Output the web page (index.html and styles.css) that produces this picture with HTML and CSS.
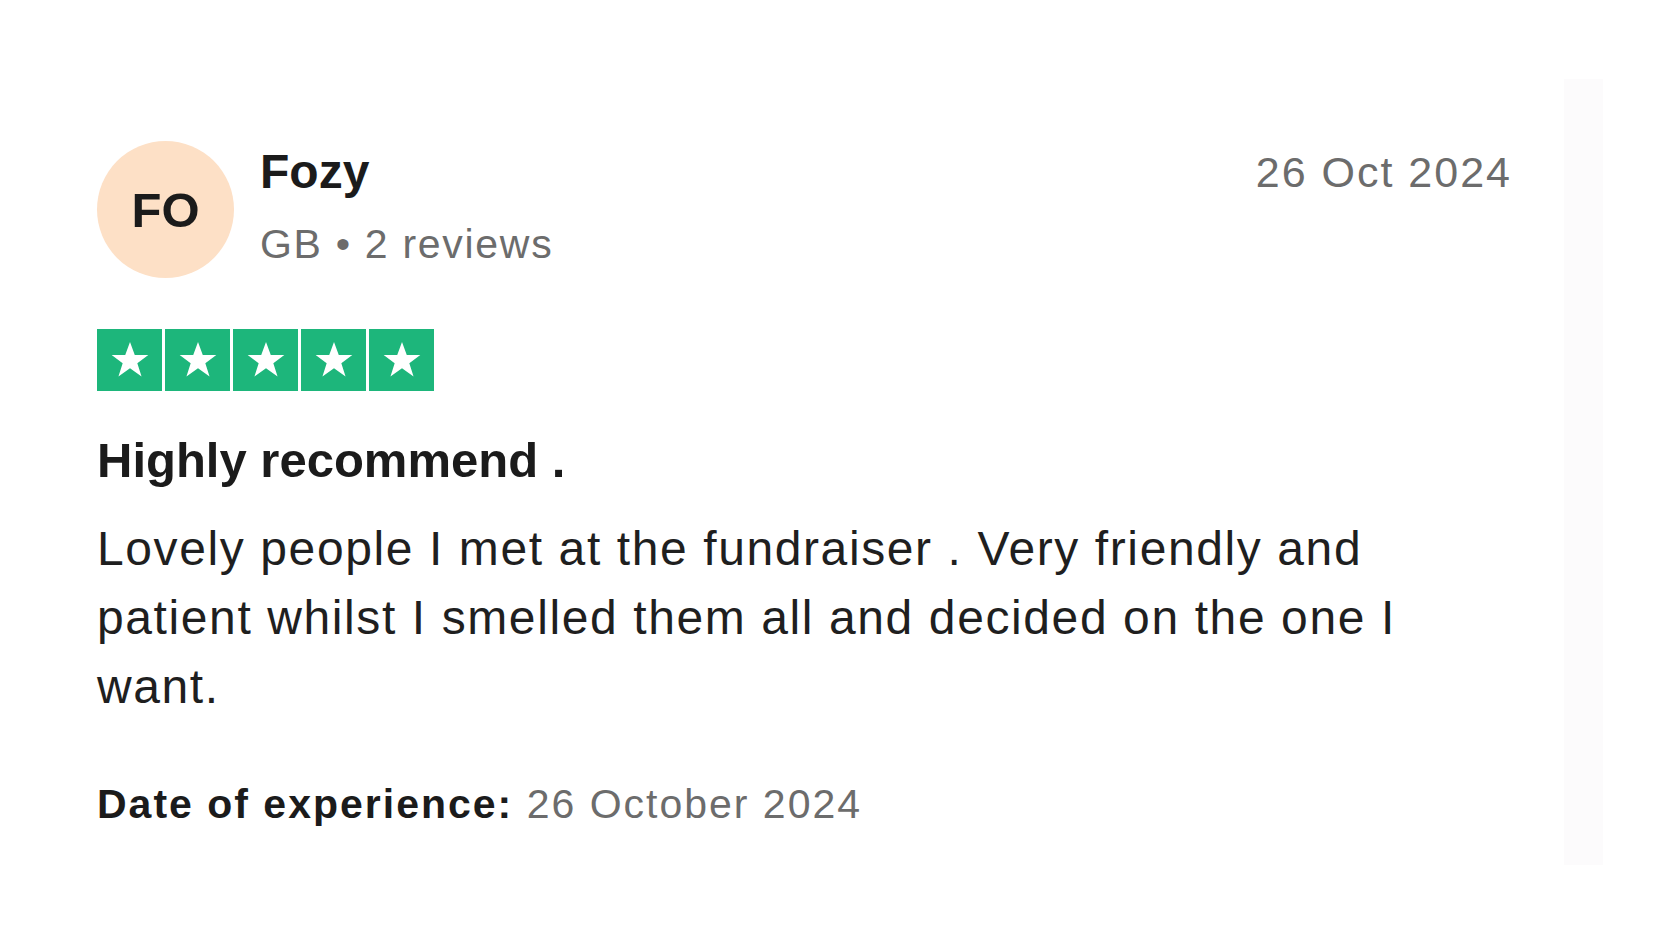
FILE: index.html
```html
<!DOCTYPE html>
<html lang="en">
<head>
<meta charset="utf-8">
<title>Review</title>
<link rel="stylesheet" href="styles.css">
</head>
<body>
<div class="page">
  <article class="review">
    <header class="review-header">
      <div class="avatar">FO</div>
      <div class="consumer">
        <div class="consumer-name">Fozy</div>
        <div class="consumer-meta">GB • 2 reviews</div>
      </div>
      <time class="review-date">26 Oct 2024</time>
    </header>
    <div class="stars">
      <span class="star"><svg viewBox="0 0 24 24"><polygon points="12,2.2 14.6,9.3 22,9.3 16,13.8 18.3,21 12,16.5 5.7,21 8,13.8 2,9.3 9.4,9.3"/></svg></span>
      <span class="star"><svg viewBox="0 0 24 24"><polygon points="12,2.2 14.6,9.3 22,9.3 16,13.8 18.3,21 12,16.5 5.7,21 8,13.8 2,9.3 9.4,9.3"/></svg></span>
      <span class="star"><svg viewBox="0 0 24 24"><polygon points="12,2.2 14.6,9.3 22,9.3 16,13.8 18.3,21 12,16.5 5.7,21 8,13.8 2,9.3 9.4,9.3"/></svg></span>
      <span class="star"><svg viewBox="0 0 24 24"><polygon points="12,2.2 14.6,9.3 22,9.3 16,13.8 18.3,21 12,16.5 5.7,21 8,13.8 2,9.3 9.4,9.3"/></svg></span>
      <span class="star"><svg viewBox="0 0 24 24"><polygon points="12,2.2 14.6,9.3 22,9.3 16,13.8 18.3,21 12,16.5 5.7,21 8,13.8 2,9.3 9.4,9.3"/></svg></span>
    </div>
    <h2 class="review-title">Highly recommend .</h2>
    <p class="review-text">Lovely people I met at the fundraiser . Very friendly and patient whilst I smelled them all and decided on the one I want.</p>
    <p class="experience"><b>Date of experience:</b> 26 October 2024</p>
  </article>
  <div class="side-strip"></div>
</div>
</body>
</html>
```

FILE: styles.css
```css
* { box-sizing: border-box; }
html, body { margin: 0; padding: 0; background: #ffffff; }
body {
  font-family: "Liberation Sans", Arial, Helvetica, sans-serif;
  color: #1b1b1b;
}
.page {
  display: flex;
  align-items: flex-start;
  padding: 79px 0 0 97px;
  gap: 52px;
}
.review {
  width: 1415px;
  margin-top: 62px;
}
.review-header {
  display: flex;
  align-items: flex-start;
}
.avatar {
  flex: 0 0 137px;
  width: 137px;
  height: 137px;
  border-radius: 50%;
  background: #fde0c6;
  display: flex;
  align-items: center;
  justify-content: center;
  font-weight: 700;
  font-size: 49px;
  color: #1b1b1b;
}
.consumer {
  flex: 1;
  margin-left: 26px;
  padding-top: 3px;
}
.consumer-name {
  font-weight: 700;
  font-size: 48px;
  line-height: 55px;
}
.consumer-meta {
  margin-top: 22px;
  font-size: 41px;
  line-height: 46px;
  letter-spacing: 1.7px;
  color: #6c6c6c;
}
.review-date {
  margin-top: 7px;
  font-size: 43px;
  line-height: 48px;
  letter-spacing: 2px;
  color: #6c6c6c;
}
.stars {
  display: flex;
  gap: 3px;
  margin-top: 51px;
}
.star {
  width: 65px;
  height: 62px;
  background: #1db67b;
  display: flex;
  align-items: center;
  justify-content: center;
}
.star svg {
  width: 44px;
  height: 44px;
  fill: #ffffff;
}
.review-title {
  margin: 41px 0 0;
  font-size: 49px;
  line-height: 56px;
  font-weight: 700;
}
.review-text {
  margin: 26px 0 0;
  font-size: 48px;
  line-height: 69px;
  letter-spacing: 1.6px;
  color: #1f1f1f;
}
.experience {
  margin: 60px 0 0;
  font-size: 41px;
  line-height: 46px;
  letter-spacing: 2px;
  color: #6c6c6c;
}
.experience b {
  color: #1b1b1b;
  font-weight: 700;
}
.side-strip {
  width: 39px;
  height: 786px;
  background: #fcfbfc;
}
```
